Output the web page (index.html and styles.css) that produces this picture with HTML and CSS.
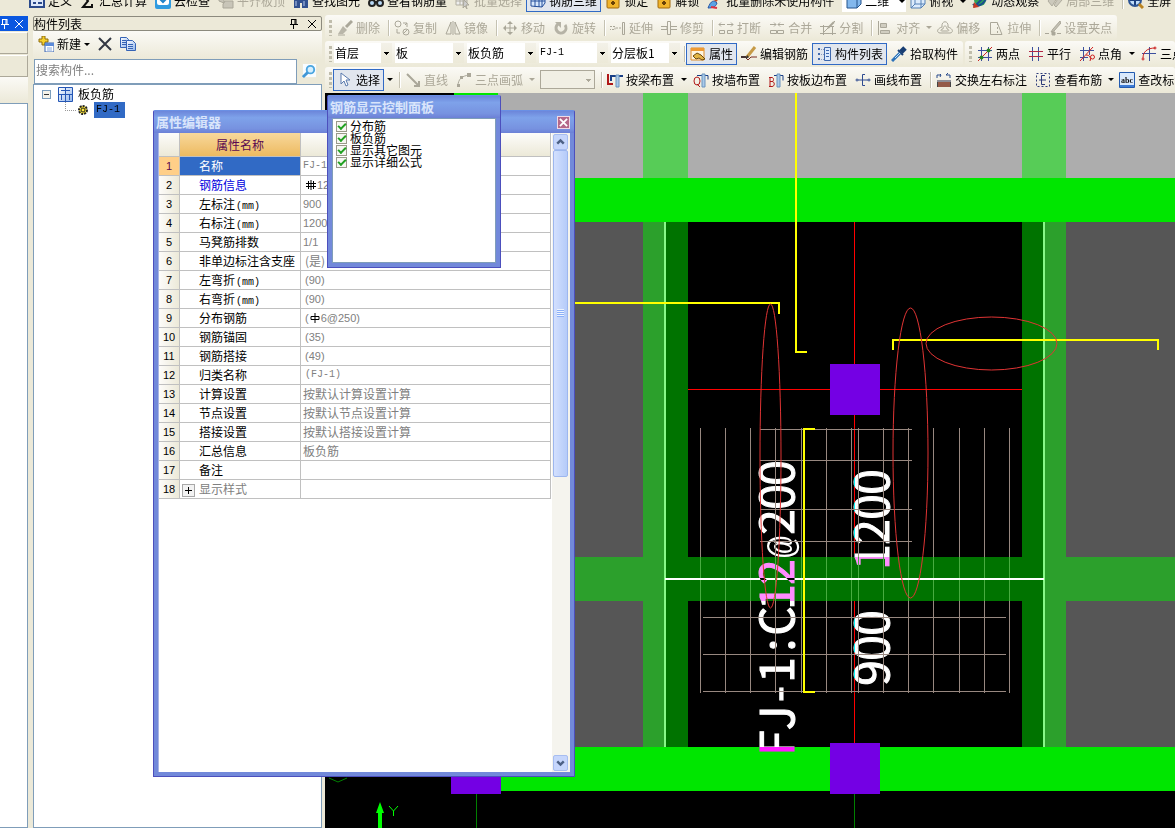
FILE: index.html
```html
<!DOCTYPE html>
<html lang="zh-CN">
<head>
<meta charset="utf-8">
<title>钢筋算量</title>
<link rel="stylesheet" href="styles.css">
</head>
<body>
<svg class="defs" aria-hidden="true">
  <defs>
    <linearGradient id="gb" x1="0" y1="0" x2="1" y2="1"><stop offset="0" stop-color="#fff"/><stop offset="1" stop-color="#8fb4ec"/></linearGradient>
    <symbol id="define" viewBox="0 0 16 16"><path d="M1 1h14v13H1z" fill="#dde8fa" stroke="#2b4a8c" stroke-width="2"/><path d="M4 6h3M4 10h3M9 6h4M9 10h4" stroke="#2b4a8c" stroke-width="2"/></symbol>
    <symbol id="sum" viewBox="0 0 16 16"><path d="M12 5V2H3l5 6-5 6h9v-3" fill="none" stroke="#111" stroke-width="2"/></symbol>
    <symbol id="cloud" viewBox="0 0 16 16"><rect y="0" width="16" height="16" rx="2" fill="#2f9be0"/><rect x="2" y="2" width="12" height="10" rx="2" fill="#fff"/><path d="M5 6l3 3 5-5" fill="none" stroke="#2083c8" stroke-width="2"/></symbol>
    <symbol id="align-top" viewBox="0 0 16 16"><path d="M1 3l5-2v9l-5-2zM7 8h8v7H5v-4z" fill="#c8c5b8" stroke="#aaa799"/><path d="M9 1v6M12 1v6" stroke="#b5b2a5"/></symbol>
    <symbol id="binoc" viewBox="0 0 16 16"><path d="M1 15V7l2-5h3v5h4V2h3l2 5v8H9v-5H7v5z" fill="#31508f"/><path d="M3 8v5M11 8v5M4 3v3M12 3v3" stroke="#b6c9ee" stroke-width="1"/></symbol>
    <symbol id="glasses" viewBox="0 0 16 16"><circle cx="4" cy="10" r="3" fill="#b9d9f6" stroke="#222" stroke-width="2"/><circle cx="12" cy="10" r="3" fill="#b9d9f6" stroke="#222" stroke-width="2"/><path d="M7 9h2" stroke="#222" stroke-width="2"/></symbol>
    <symbol id="batch" viewBox="0 0 16 16"><path d="M1 1h11v11H1zM1 5h11M1 8h11M5 1v11M8 1v11" fill="#eee" stroke="#b2afa2"/><path d="M9 7l5 5-3 0 1 4-2-3-2 2z" fill="#ccc" stroke="#aaa799"/></symbol>
    <symbol id="rebar3d" viewBox="0 0 16 16"><path d="M1 13V4l4-3h10v9l-3 4zM1 8h14M5 1v13M9 1v13M12 4v10" fill="#d6e7fc" stroke="#244f9b"/></symbol>
    <symbol id="lock" viewBox="0 0 16 16"><path d="M4 7V3h7v4" fill="none" stroke="#777" stroke-width="2"/><rect x="2" y="6" width="12" height="9" rx="1" fill="#f1b52c" stroke="#a26b0d"/><path d="M8 8v4M6 10h4" stroke="#694107" stroke-width="2"/></symbol>
    <symbol id="brush" viewBox="0 0 16 16"><path d="M14 1L8 8" stroke="#c14b28" stroke-width="3"/><path d="M1 15c3-8 6-8 9-5-1 4-5 5-9 5z" fill="#5ba3e6" stroke="#2755a4"/><path d="M4 14l6 1" stroke="#d34" stroke-width="2"/></symbol>
    <symbol id="cube" viewBox="0 0 16 16"><path d="M1 4l4-3h10v10l-4 4H1z" fill="#83b8ed" stroke="#24548d"/><path d="M1 4h10v11M11 4l4-3" fill="none" stroke="#24548d"/></symbol>
    <symbol id="cube2" viewBox="0 0 16 16"><path d="M1 4l4-3h10v10l-4 4H1z" fill="#dcebfb" stroke="#5481b6"/><path d="M1 4h10v11M11 4l4-3M5 1v10l-4 4M5 11h10" fill="none" stroke="#5481b6"/></symbol>
    <symbol id="orbit" viewBox="0 0 16 16"><circle cx="8" cy="7" r="6" fill="#31a35a"/><path d="M2 14L14 2M1 11c3 4 10 1 13-5" stroke="#1b4d8f" stroke-width="2" fill="none"/><path d="M1 15l1-6 5 5z" fill="#c73b24"/></symbol>
    <symbol id="part3d" viewBox="0 0 16 16"><path d="M1 8l5-6 4 3-5 8zM7 12l5-8 3 3-6 7z" fill="#ccc9bc" stroke="#b0ad9f"/></symbol>
    <symbol id="full" viewBox="0 0 16 16"><circle cx="7" cy="7" r="6" fill="#bfdcf8" stroke="#2d5595" stroke-width="2"/><path d="M7 2v10M2 7h10" stroke="#1b3f7f" stroke-width="2"/><path d="M11 11l4 4" stroke="#bb8420" stroke-width="3"/></symbol>
    <symbol id="erase" viewBox="0 0 16 16"><path d="M15 1L9 7" stroke="#aaa799" stroke-width="3"/><path d="M6 6l4 4-4 4H1z" fill="#b9b6a9"/><path d="M1 15h7" stroke="#aaa799"/></symbol>
    <symbol id="copy" viewBox="0 0 16 16" fill="none" stroke="#aaa799"><circle cx="4" cy="4" r="3"/><circle cx="12" cy="12" r="3"/><path d="M9 3h4v4M13 3l-2 2M3 9v4h3M9 14l4-4"/></symbol>
    <symbol id="mirror" viewBox="0 0 16 16" fill="none" stroke="#aaa799"><path d="M6 2v12H1zM10 2v12h5zM8 1v14"/></symbol>
    <symbol id="move" viewBox="0 0 16 16"><path d="M8 3v10M3 8h10" stroke="#aaa799"/><path d="M8 1l3 3H5zM8 15l3-3H5zM1 8l3-3v6zM15 8l-3-3v6z" fill="#aaa799"/></symbol>
    <symbol id="rotate" viewBox="0 0 16 16"><path d="M5 4a5 5 0 1 0 7 1" fill="none" stroke="#b6b3a6" stroke-width="3"/><path d="M2 2h6v6z" fill="#b6b3a6"/></symbol>
    <symbol id="extend" viewBox="0 0 16 16" fill="none" stroke="#aaa799"><path d="M0 6.500h5v3H0M6 8h5" stroke-dasharray="2 1"/><path d="M12.500 2.500h2v12h-2z"/></symbol>
    <symbol id="trim" viewBox="0 0 16 16" fill="none" stroke="#aaa799"><path d="M6.500 1.500h3v13h-3zM0 6.500h6v3H0M10 6.500h6M10 9.500h6"/></symbol>
    <symbol id="break" viewBox="0 0 16 16" fill="none" stroke="#aaa799"><path d="M1.500 10.500h5v3h-5zM9.500 10.500h5v3h-5zM7 4.500H1l2-2M1 4.500l2 2M9 4.500h6l-2-2M15 4.500l-2 2"/></symbol>
    <symbol id="merge" viewBox="0 0 16 16" fill="none" stroke="#aaa799"><path d="M1.500 10.500h6v3h-6zM8.500 10.500h6v3h-6zM1 4.500h6l-2-2M7 4.500l-2 2M15 4.500H9l2-2M9 4.500l2 2"/></symbol>
    <symbol id="split" viewBox="0 0 16 16" fill="none" stroke="#aaa799"><path d="M0 6.500h14M0 13.500h16M3.500 5v10M12.500 6v9M15 1L4 12" /><path d="M14 2l-6 6" stroke-width="2"/></symbol>
    <symbol id="align" viewBox="0 0 16 16" fill="none" stroke="#aaa799"><path d="M1.500 1v14M3.500 3.500h6v4h-6zM3.500 10.500h9v3h-9z" fill="#d0cdc0"/></symbol>
    <symbol id="offset" viewBox="0 0 16 16" fill="none" stroke="#aaa799"><path d="M5 7c-1-7 7-7 6 0 6 2 5 6 2 6H3C0 13-1 9 5 7z"/><path d="M6 9c0-4 4-4 4 0 3 1 2 2 0 2H5c-2 0-1-2 1-2z"/></symbol>
    <symbol id="stretch" viewBox="0 0 16 16" fill="none" stroke="#aaa799"><path d="M9 2.500H2.500v12H9M9 2l5 12.500H9"/><path d="M9.500 3v10" stroke-dasharray="2 2"/></symbol>
    <symbol id="grip" viewBox="0 0 16 16"><path d="M15 1l-7 8-2 3 3-1 7-8z" fill="#c3c0b4" stroke="#aaa799"/><path d="M0 13.500h4M12 13.500h4M7 12h3v3H7z" stroke="#aaa799" fill="#aaa799"/></symbol>
    <symbol id="props" viewBox="0 0 16 16"><path d="M1 2h13v12H1z" fill="#fff5df" stroke="#de8d28"/><path d="M1 2h13v3H1z" fill="#ef9b34"/><path d="M3 10l4-3 4 2 4 4-3 1-3-2-3 1z" fill="#e2b544" stroke="#6b4b12"/></symbol>
    <symbol id="editbar" viewBox="0 0 16 16"><path d="M0 11h4l3 3 3-3h6" stroke="#7a2d22" stroke-width="1" fill="none"/><path d="M0 10h6v2H0z" fill="#433"/><path d="M14 1L6 11" stroke="#c69a46" stroke-width="3"/><path d="M6 9l-1 4 3-2z" fill="#333"/></symbol>
    <symbol id="list" viewBox="0 0 16 16"><path d="M8.500 1.500h6v13h-6z" fill="#dceafe" stroke="#3f68ad"/><path d="M10 4.500h3M10 7.500h3M10 10.500h3" stroke="#3f68ad"/><path d="M2 3h2M2 8h2M2 13h2" stroke="#3f68ad" stroke-width="2"/><path d="M5 3.500h3M5 8.500h3M5 13.500h3" stroke="#8a9bbd" stroke-dasharray="1 1"/></symbol>
    <symbol id="picker" viewBox="0 0 16 16"><path d="M14 2l-4 4" stroke="#173d73" stroke-width="5"/><path d="M7 4l5 5" stroke="#173d73" stroke-width="2"/><path d="M9 7l-6 6-2 2" stroke="#2c72b9" stroke-width="3"/><path d="M9 7l-5 5" stroke="#bfe2fa" stroke-width="1"/></symbol>
    <symbol id="twopt" viewBox="0 0 16 16"><path d="M4.500 1v14M11.500 1v14M1 4.500h14M1 11.500h14" stroke="#3c4f9e"/><path d="M1 15L15 1" stroke="#c22"/><circle cx="4.500" cy="11.500" r="2" fill="#27811f"/><circle cx="11.500" cy="4.500" r="2" fill="#27811f"/></symbol>
    <symbol id="parallel" viewBox="0 0 16 16"><path d="M4.500 1v14M10.500 1v14" stroke="#3c4f9e"/><path d="M1 5.500h14M1 10.500h14" stroke="#b22746"/></symbol>
    <symbol id="angle" viewBox="0 0 16 16"><path d="M4.500 1v14M10.500 1v8M1 4.500h14M1 11.500h8" stroke="#3c4f9e"/><path d="M1 15L14 1M11 15a4 4 0 0 0-4-6" stroke="#c22" fill="none"/><circle cx="13.500" cy="11" r="2" fill="none" stroke="#c22"/></symbol>
    <symbol id="arcaxis" viewBox="0 0 16 16"><path d="M8.500 1v14M1 7.500h14" stroke="#3c4f9e"/><path d="M2 12C2 6 6 2 14 2" stroke="#c22" fill="none"/><circle cx="2" cy="13" r="1" fill="none" stroke="#c22"/><circle cx="14" cy="2" r="1" fill="none" stroke="#c22"/></symbol>
    <symbol id="select" viewBox="0 0 16 16"><path d="M4 1v11l3-3 2 5 2-1-2-5h4z" fill="#fff" stroke="#5879ad"/></symbol>
    <symbol id="line" viewBox="0 0 16 16"><path d="M2 2l11 11M14 9v5H9" stroke="#aaa799" stroke-width="2" fill="none"/></symbol>
    <symbol id="arc" viewBox="0 0 16 16"><path d="M2 14C2 7 6 4 13 3" stroke="#aaa799" fill="none"/><path d="M1 12h3v3H1zM4 4h3v3H4zM11 1h4v4h-4z" fill="#aaa799"/></symbol>
    <symbol id="beam" viewBox="0 0 16 16"><path d="M1 2v10h5" stroke="#b01818" stroke-width="2" fill="none"/><path d="M4 9V4h12" stroke="#193f86" stroke-width="2" fill="none"/><path d="M9 3h3v12H9z" fill="#a9cae9" stroke="#6b93bd"/></symbol>
    <symbol id="wall" viewBox="0 0 16 16"><ellipse cx="4" cy="9" rx="3" ry="4" stroke="#b01818" fill="none"/><path d="M4 12l3 3" stroke="#b01818"/><path d="M4 3.500h11v4" stroke="#193f86" fill="none"/><path d="M9 2h3v13H9z" fill="#a9cae9" stroke="#6b93bd"/></symbol>
    <symbol id="edge" viewBox="0 0 16 16"><path d="M1 5.500h3c2 0 2 4 0 4H2h2c3 0 3 5 0 5H1M2 5v9" stroke="#b01818" fill="none"/><path d="M6 3.500h9v5" stroke="#193f86" fill="none"/><path d="M9 2h3v13H9z" fill="#a9cae9" stroke="#6b93bd"/></symbol>
    <symbol id="drawline" viewBox="0 0 16 16" fill="none" stroke="#2e4b90"><path d="M10 2.500H7.500v11H10M3 8h4M8 8h5"/><circle cx="2" cy="8" r="1"/><circle cx="14" cy="8" r="1"/></symbol>
    <symbol id="swap" viewBox="0 0 16 16"><path d="M1 6V3h4l-1-1M4 5l1-2M10 3h4v3M10 3l2-2" stroke="#294b8b" fill="none"/><path d="M1 8h14v7H1z" fill="#444"/><path d="M3 10v5M5 10v5M7 10v5M9 10v5M11 10v5M13 10v5" stroke="#e6704c"/><path d="M1 9h14" stroke="#d8d8e8"/></symbol>
    <symbol id="look" viewBox="0 0 16 16" fill="none" stroke="#2c3b79"><rect x="1.500" y="1.500" width="13" height="13" stroke-dasharray="2 2"/><path d="M10 3.500H6.500v9H10M4 8h7"/></symbol>
    <symbol id="abc" viewBox="0 0 16 16"><path d="M.5.5h15v15H.5z" fill="#d9e9fc" stroke="#235bb0"/><path d="M1 13h14v2H1z" fill="#3d7bd5"/><text x="8" y="11" text-anchor="middle" class="abc-t">abc</text></symbol>
    <symbol id="new" viewBox="0 0 16 16"><path d="M4 0h3v3h3v3H7v3H4V6H1V3h3z" fill="#f6d02c" stroke="#8e6d0d"/><path d="M7 7h9v9H7z" fill="#fff" stroke="#3763b0"/><path d="M7 7h9v3H7z" fill="#5b8ad9"/><path d="M9 12h5M9 14h5" stroke="#86a9de"/></symbol>
    <symbol id="del" viewBox="0 0 16 16"><path d="M2 2l12 12M14 2L2 14" stroke="#333844" stroke-width="2"/></symbol>
    <symbol id="dup" viewBox="0 0 16 16" fill="url(#gb)" stroke="#3563b5"><path d="M.5 1.500h6l2 2v8h-8z"/><path d="M6.500 4.500h6l3 3v7h-9z"/><path d="M8 8.500h5M8 10.500h5M8 12.500h5M2 4.500h4M2 6.500h4M2 8.500h4"/></symbol>
    <symbol id="find" viewBox="0 0 16 16"><path d="M1 0h14v14H1z" fill="#f8fcff"/><circle cx="9" cy="6" r="4" fill="#d5efff" stroke="#4aa5e0" stroke-width="2"/><path d="M6 9l-5 5" stroke="#4197d6" stroke-width="3"/></symbol>
    <symbol id="slab" viewBox="0 0 15 15"><path d="M.5.5h14v14H.5z" fill="url(#gb)" stroke="#2456b5"/><path d="M3 3.500h9M7.500 1v13M1 7.500h13M3.500 8v5M11.500 8v5" stroke="#2456b5" fill="none"/></symbol>
    <symbol id="gear" viewBox="0 0 12 12"><circle cx="6" cy="6" r="4" fill="#ffe838" stroke="#222" stroke-width="2" stroke-dasharray="2 1"/><circle cx="6" cy="6" r="2" fill="none" stroke="#222"/></symbol>
    <symbol id="pin" viewBox="0 0 10 10"><path d="M2.500 0v5M2 .5h5M6 0v5M7 0v5M1 5.500h8M4.500 5v5" stroke="currentColor" fill="none"/></symbol>
    <symbol id="x" viewBox="0 0 10 10"><path d="M1 1l8 8M9 1L1 9" stroke="currentColor" fill="none"/></symbol>
    <symbol id="up" viewBox="0 0 16 16"><path d="M4 10l4-4 4 4" stroke="#4d6185" stroke-width="3" fill="none"/></symbol>
    <symbol id="down" viewBox="0 0 16 16"><path d="M4 6l4 4 4-4" stroke="#4d6185" stroke-width="3" fill="none"/></symbol>
  </defs>
</svg>

<div class="app">
  <div class="top-row">
    <button class="tb"><svg><use href="#define"/></svg>定义</button>
    <button class="tb"><svg><use href="#sum"/></svg>汇总计算</button>
    <button class="tb"><svg><use href="#cloud"/></svg>云检查</button>
    <button class="tb" disabled><svg><use href="#align-top"/></svg>平齐板顶</button>
    <button class="tb"><svg><use href="#binoc"/></svg>查找图元</button>
    <button class="tb"><svg><use href="#glasses"/></svg>查看钢筋量</button>
    <button class="tb" disabled><svg><use href="#batch"/></svg>批量选择</button>
    <button class="tb on"><svg><use href="#rebar3d"/></svg>钢筋三维</button>
    <button class="tb"><svg><use href="#lock"/></svg>锁定</button>
    <button class="tb"><svg><use href="#lock"/></svg>解锁</button>
    <button class="tb"><svg><use href="#brush"/></svg>批量删除未使用构件</button>
    <button class="tb view"><svg><use href="#cube"/></svg>二维<i class="arr"></i></button>
    <button class="tb"><svg><use href="#cube2"/></svg>俯视</button><i class="arr"></i>
    <button class="tb"><svg><use href="#orbit"/></svg>动态观察</button>
    <button class="tb" disabled><svg><use href="#part3d"/></svg>局部三维</button><i class="sep"></i>
    <button class="tb"><svg><use href="#full"/></svg>全屏</button>
  </div>

  <div class="main">
    <aside class="strip">
      <div class="strip-head"><svg><use href="#pin"/></svg><svg><use href="#x"/></svg></div>
      <div class="strip-box"></div><div class="strip-box"></div><div class="strip-bar"></div>
      <div class="strip-body"></div>
    </aside>

    <aside class="panel">
      <div class="panel-head"><span>构件列表</span><svg><use href="#pin"/></svg><svg><use href="#x"/></svg></div>
      <div class="panel-tools">
        <button class="tb"><svg><use href="#new"/></svg>新建<i class="arr"></i></button>
        <button class="tb" aria-label="删除构件"><svg><use href="#del"/></svg></button>
        <button class="tb" aria-label="复制构件"><svg><use href="#dup"/></svg></button>
      </div>
      <div class="search"><input type="text" placeholder="搜索构件..." aria-label="搜索构件"><button aria-label="搜索"><svg><use href="#find"/></svg></button></div>
      <div class="tree">
        <div class="node"><i class="minus"></i><svg><use href="#slab"/></svg><span>板负筋</span></div>
        <div class="node child"><i class="branch"></i><svg><use href="#gear"/></svg><span class="sel">FJ-1</span></div>
      </div>
    </aside>

    <section class="work">
      <div class="bars">
        <div class="bar">
          <i class="grip"></i>
          <button class="tb" disabled><svg><use href="#erase"/></svg>删除</button><i class="sep"></i>
          <button class="tb" disabled><svg><use href="#copy"/></svg>复制</button>
          <button class="tb" disabled><svg><use href="#mirror"/></svg>镜像</button><i class="sep"></i>
          <button class="tb" disabled><svg><use href="#move"/></svg>移动</button>
          <button class="tb" disabled><svg><use href="#rotate"/></svg>旋转</button><i class="sep"></i>
          <button class="tb" disabled><svg><use href="#extend"/></svg>延伸</button>
          <button class="tb" disabled><svg><use href="#trim"/></svg>修剪</button><i class="sep"></i>
          <button class="tb" disabled><svg><use href="#break"/></svg>打断</button>
          <button class="tb" disabled><svg><use href="#merge"/></svg>合并</button>
          <button class="tb" disabled><svg><use href="#split"/></svg>分割</button><i class="sep"></i>
          <button class="tb" disabled><svg><use href="#align"/></svg>对齐</button><i class="arr off"></i>
          <button class="tb" disabled><svg><use href="#offset"/></svg>偏移</button>
          <button class="tb" disabled><svg><use href="#stretch"/></svg>拉伸</button><i class="sep"></i>
          <button class="tb" disabled><svg><use href="#grip"/></svg>设置夹点</button>
        </div>
      </div>
      <div class="bars">
        <div class="bar">
          <i class="grip"></i>
          <select class="combo short" aria-label="楼层"><option>首层</option></select>
          <select class="combo" aria-label="构件类别"><option>板</option></select>
          <select class="combo" aria-label="构件类型"><option>板负筋</option></select>
          <select class="combo latin" aria-label="构件"><option>FJ-1</option></select>
          <select class="combo" aria-label="分层"><option>分层板1</option></select><i class="sep"></i>
          <button class="tb on"><svg><use href="#props"/></svg>属性</button>
          <button class="tb"><svg><use href="#editbar"/></svg>编辑钢筋</button>
          <button class="tb on"><svg><use href="#list"/></svg>构件列表</button>
          <button class="tb"><svg><use href="#picker"/></svg>拾取构件</button>
        </div>
        <div class="bar fill">
          <i class="grip"></i>
          <button class="tb"><svg><use href="#twopt"/></svg>两点</button>
          <button class="tb"><svg><use href="#parallel"/></svg>平行</button>
          <button class="tb"><svg><use href="#angle"/></svg>点角</button><i class="arr"></i>
          <button class="tb"><svg><use href="#arcaxis"/></svg>三点辅轴</button>
        </div>
      </div>
      <div class="bars">
        <div class="bar fill">
          <i class="grip"></i>
          <button class="tb on"><svg><use href="#select"/></svg>选择</button><i class="arr"></i><i class="sep"></i>
          <button class="tb" disabled><svg><use href="#line"/></svg>直线</button>
          <button class="tb" disabled><svg><use href="#arc"/></svg>三点画弧</button><i class="arr off"></i>
          <select class="combo empty" aria-label="画弧方式" disabled><option></option></select><i class="sep"></i>
          <button class="tb"><svg><use href="#beam"/></svg>按梁布置</button><i class="arr"></i>
          <button class="tb"><svg><use href="#wall"/></svg>按墙布置</button>
          <button class="tb"><svg><use href="#edge"/></svg>按板边布置</button>
          <button class="tb"><svg><use href="#drawline"/></svg>画线布置</button><i class="sep"></i>
          <button class="tb"><svg><use href="#swap"/></svg>交换左右标注</button>
          <button class="tb"><svg><use href="#look"/></svg>查看布筋</button><i class="arr off dark"></i>
          <button class="tb"><svg><use href="#abc"/></svg>查改标注</button>
        </div>
      </div>

      <div class="canvas">
        <svg viewBox="325 93 850 735" preserveAspectRatio="xMinYMin slice">
          <rect x="325" y="93" width="850" height="735" fill="#000"/>
          <rect x="498" y="93" width="677" height="85" fill="#adadad"/>
          <rect x="454" y="93" width="44" height="85" fill="#00e600"/>
          <g fill="#57cc57"><rect x="643" y="93" width="45" height="85"/><rect x="1022" y="93" width="44" height="85"/></g>
          <g fill="#565656"><rect x="501" y="222" width="142" height="525"/><rect x="1066" y="222" width="109" height="525"/></g>
          <g fill="#2ca02c"><rect x="643" y="222" width="22" height="525"/><rect x="1044" y="222" width="22" height="525"/><rect x="501" y="557" width="164" height="44"/><rect x="1044" y="557" width="131" height="44"/></g>
          <path d="M854.5 222V557M854.5 601V743M688 389.5H1022" stroke="#f00" fill="none"/>
          <g fill="#007300"><rect x="665" y="222" width="23" height="525"/><rect x="1022" y="222" width="22" height="525"/><rect x="688" y="557" width="334" height="44"/></g>
          <path d="M665 222V747M1044 222V747" stroke="#88f888" stroke-width="2"/>
          <g fill="#00e600"><rect x="501" y="178" width="674" height="44"/><rect x="501" y="747" width="674" height="44"/></g>
          <path d="M665 579H1044" stroke="#fff" stroke-width="2"/>
          <g class="cad">
            <text transform="translate(794 754) rotate(-90)" x="11 36 60 84 109 133 157 182 207 232 257 281">FJ-1:C12<tspan class="at">@</tspan>200</text>
            <text transform="translate(889 754) rotate(-90)" x="197 222 247 272">1200</text>
            <text transform="translate(889 754) rotate(-90)" x="81 106 131">900</text>
          </g>
          <path d="M700.5 428V693M725.5 428V693M750.5 428V693M775.5 428V693M801.5 428V693M826.5 428V693M851.5 428V693M858.5 428V693M883.5 428V693M908.5 428V693M933.5 428V693M959.5 428V693M984.5 428V693M1009.5 428V693M760 429.5H912M760 460.5H912M760 509.5H912M760 541.5H912M703 617.5H1006M703 654.5H1006M703 691.5H1006" stroke="#988880"/>
          <path d="M700.5 557v44M725.5 557v44M750.5 557v44M775.5 557v44M801.5 557v44M826.5 557v44M851.5 557v44M858.5 557v44M883.5 557v44M908.5 557v44M933.5 557v44M959.5 557v44M984.5 557v44M1009.5 557v44" stroke="#48ac40"/>
          <path d="M665 579H760M797 579H1044" stroke="#fff" stroke-width="2"/>
          <path d="M501 303H779V314M796 93V352H807M893 350V340H1158V350M815 429H804V692H815" stroke="#ff0" stroke-width="2" fill="none"/>
          <g fill="none" stroke="#e03434"><ellipse cx="770.5" cy="456" rx="10.5" ry="152"/><ellipse cx="910.5" cy="453" rx="17.5" ry="145"/><ellipse cx="991.5" cy="343.5" rx="65.5" ry="26.5"/></g>
          <g fill="#7400e4"><rect x="830" y="364" width="50" height="51"/><rect x="830" y="743" width="50" height="51"/><rect x="451" y="743" width="50" height="51"/></g>
          <path d="M854.5 794V828M476.5 794V828M329 778l9 4 9-4" stroke="#008000" fill="none"/>
          <path d="M378 828V813h-2l4-11 4 11h-2v15z" fill="#0f0"/>
          <path d="M389 806l4.500 5 4.500-5M393.500 811v5" stroke="#0f0" fill="none"/>
        </svg>
      </div>
    </section>
  </div>

  <section class="win props">
    <header><h2>属性编辑器</h2><button class="close" aria-label="关闭"><svg><use href="#x"/></svg></button></header>
    <div class="win-body">
      <div class="grid">
        <table>
          <thead><tr><th class="no"></th><th class="hot">属性名称</th><th></th></tr></thead>
          <tbody>
            <tr class="cur"><th>1</th><td>名称</td><td class="la">FJ-1</td></tr>
            <tr class="key"><th>2</th><td>钢筋信息</td><td class="in"><svg class="bar-sym" viewBox="0 0 10 10"><path d="M0 3.500h10M0 6.500h10M2.500 1v8M7.500 1v8M5 0v10" stroke="#000" fill="none"/></svg>12</td></tr>
            <tr><th>3</th><td>左标注<span class="mm">(mm)</span></td><td>900</td></tr>
            <tr><th>4</th><td>右标注<span class="mm">(mm)</span></td><td>1200</td></tr>
            <tr><th>5</th><td>马凳筋排数</td><td>1/1</td></tr>
            <tr><th>6</th><td>非单边标注含支座</td><td class="in zh">(是)</td></tr>
            <tr><th>7</th><td>左弯折<span class="mm">(mm)</span></td><td class="in">(90)</td></tr>
            <tr><th>8</th><td>右弯折<span class="mm">(mm)</span></td><td class="in">(90)</td></tr>
            <tr><th>9</th><td>分布钢筋</td><td class="in">(<svg class="bar-sym" viewBox="0 0 10 10"><path d="M1 3.500h8v3H1zM5 0v10" stroke="#000" fill="none"/></svg>6@250)</td></tr>
            <tr><th>10</th><td>钢筋锚固</td><td class="in">(35)</td></tr>
            <tr><th>11</th><td>钢筋搭接</td><td class="in">(49)</td></tr>
            <tr><th>12</th><td>归类名称</td><td class="in la">(FJ-1)</td></tr>
            <tr><th>13</th><td>计算设置</td><td class="zh">按默认计算设置计算</td></tr>
            <tr><th>14</th><td>节点设置</td><td class="zh">按默认节点设置计算</td></tr>
            <tr><th>15</th><td>搭接设置</td><td class="zh">按默认搭接设置计算</td></tr>
            <tr><th>16</th><td>汇总信息</td><td class="zh">板负筋</td></tr>
            <tr><th>17</th><td>备注</td><td></td></tr>
            <tr class="group"><th>18</th><td><button class="plus" aria-label="展开"></button>显示样式</td><td></td></tr>
          </tbody>
        </table>
      </div>
      <div class="scroll">
        <button aria-label="向上"><svg><use href="#up"/></svg></button>
        <div class="track"><div class="thumb"><i></i></div></div>
        <button aria-label="向下"><svg><use href="#down"/></svg></button>
      </div>
    </div>
  </section>

  <section class="win display">
    <header><h2>钢筋显示控制面板</h2></header>
    <div class="win-body checks">
      <label><input type="checkbox" checked>分布筋</label>
      <label><input type="checkbox" checked>板负筋</label>
      <label><input type="checkbox" checked>显示其它图元</label>
      <label><input type="checkbox" checked>显示详细公式</label>
    </div>
  </section>
</div>
</body>
</html>
```
FILE: styles.css
```css
* { box-sizing: border-box; }
body {
  margin: 0;
  font: 12px/16px "Noto Sans CJK SC", sans-serif;
  color: #000;
  background: #ece9d8;
}
button, input, select { font: inherit; color: inherit; margin: 0; padding: 0; border: 0; background: none; }
.defs { position: absolute; width: 0; height: 0; }
.abc-t { font: bold 8px "Liberation Serif", serif; fill: #111; }

.app { position: relative; display: flex; flex-direction: column; height: 100vh; overflow: hidden; }

/* toolbar parts */
.tb {
  display: flex; align-items: center; gap: 3px; flex: none;
  height: 22px; padding: 0 3px; border: 1px solid transparent; white-space: nowrap;
}
.tb svg { width: 16px; height: 16px; flex: none; }
.tb:disabled { color: #aca899; }
.tb.on { border-color: #316ac5; background: #e1e6ee; }
.arr { flex: none; width: 11px; height: 3px; display: flex; justify-content: center; }
.arr::after { content: ""; border: 3px solid transparent; border-top-color: #000; border-bottom: 0; }
.arr.off { width: 9px; }
.arr.off::after { border-top-color: #aca899; }
.arr.dark::after { border-top-color: #000; }
.sep { flex: none; width: 6px; height: 16px; border-right: 1px solid #fff; background: linear-gradient(#c5c2b2, #c5c2b2) 4px 0 / 1px 100% no-repeat; }
.grip { flex: none; width: 3px; height: 16px; margin: 0 1px 0 4px; background: repeating-linear-gradient(#c0bdac 0 3px, transparent 3px 5px); }

.top-row { display: flex; align-items: center; flex: none; height: 22px; margin-top: -10px; padding-left: 25px; overflow: hidden; }
.top-row .view { margin-left: 4px; width: 64px; background: #fff; }
.top-row .view .arr { margin-left: 4px; }

.main { display: flex; flex: 1; min-height: 0; padding-top: 3px; }

/* cut-off dock on the left */
.strip { display: flex; flex-direction: column; flex: none; width: 28px; margin: 1px 5px 0 0; }
.strip-head { display: flex; align-items: center; justify-content: space-between; height: 15px; padding: 0 4px 0 0; background: #0a57e0; color: #fff; }
.strip-head svg { width: 10px; height: 10px; }
.strip-box { height: 22px; margin-top: 1px; border: 1px solid #aca899; border-left: 0; border-top-color: #fff; }
.strip-bar { height: 26px; background: linear-gradient(#fbfaf6, #ece9d8); }
.strip-body { flex: 1; background: #fff; border: 1px solid #7f9db9; border-left: 0; }

/* component list */
.panel { display: flex; flex-direction: column; flex: none; width: 289px; margin: 1px 3px 0 0; }
.panel-head { display: flex; align-items: center; gap: 8px; height: 15px; padding-right: 4px; border: 1px solid #8c8a7e; border-radius: 2px; line-height: 13px; }
.panel-head span { flex: 1; }
.panel-head svg { width: 10px; height: 10px; }
.panel-tools { display: flex; align-items: center; height: 28px; padding: 0 0 2px 1px; background: linear-gradient(#fbfaf6, #ece9d8); }
.panel-tools .arr { width: 6px; }
.panel-tools .tb { padding: 0 2px 0 3px; }
.search { display: flex; height: 25px; padding-left: 1px; }
.search input { flex: 1; min-width: 0; padding: 0 1px 4px; border: 1px solid #7f9db9; background: #fff; }
.search input::placeholder { color: #808080; opacity: 1; }
.search button { width: 25px; display: grid; place-items: center; }
.search svg { width: 15px; height: 15px; }
.tree { flex: 1; border: 1px solid #7f9db9; background: #fff; padding-top: 1px; }
.node { display: flex; align-items: center; height: 16px; padding-left: 8px; }
.node svg { width: 15px; height: 15px; margin: 0 5px 0 7px; }
.minus { width: 9px; height: 9px; border: 1px solid #7b9ebd; background: linear-gradient(#333, #333) center / 5px 1px no-repeat, #f5f3ea; }
.child { padding-left: 31px; }
.child svg { width: 12px; height: 12px; margin: 0 5px 0 1px; }
.branch { width: 11px; height: 9px; margin-bottom: 8px; border: 1px dotted #999; border-width: 0 0 1px 1px; }
.sel { height: 16px; width: 31px; padding-left: 2px; background: #316ac5; color: #000; font: 10px/16px "Liberation Mono", monospace; }

/* work area */
.work { display: flex; flex-direction: column; flex: 1; min-width: 0; }
.bars { display: flex; flex: none; height: 26px; gap: 2px; }
.bar { display: flex; align-items: center; flex: none; height: 25px; padding-right: 1px; border-radius: 3px; background: linear-gradient(#fbfaf6, #ece9d8); }
.bar.fill { flex: 1; min-width: 0; overflow: hidden; }
.combo {
  appearance: none; flex: none; width: 69px; height: 20px; margin: 0 0 2px 3px; padding-left: 1px; border-radius: 0;
  background: linear-gradient(#000, #000) right 3px top 9px / 5px 1px no-repeat,
    linear-gradient(#000, #000) right 4px top 10px / 3px 1px no-repeat,
    linear-gradient(#000, #000) right 5px top 11px / 1px 1px no-repeat,
    linear-gradient(#f3f1e8, #ece9d8) right / 11px 100% no-repeat, #fff;
}
.combo.short { width: 58px; margin-left: 1px; }
.combo.latin { font: 10px/16px "Liberation Mono", monospace; }
.combo.empty { width: 55px; height: 19px; margin: 0 2px 0 4px; border: 1px solid #aca899; opacity: 1;
  background: linear-gradient(#aca899, #aca899) right 3px top 8px / 5px 1px no-repeat,
    linear-gradient(#aca899, #aca899) right 4px top 9px / 3px 1px no-repeat,
    linear-gradient(#aca899, #aca899) right 5px top 10px / 1px 1px no-repeat, #f1efe4; }
.canvas { flex: 1; min-height: 0; background: #000; overflow: hidden; }
.canvas svg { display: block; width: 100%; height: 100%; }
.cad text { font: 46px "Noto Sans CJK SC", sans-serif; fill: #fff; stroke: #fff; stroke-width: 1px; text-anchor: middle; mix-blend-mode: difference; }
.cad .at { font: 36px "Liberation Mono", monospace; stroke: none; }

/* floating windows */
.win { position: absolute; display: flex; flex-direction: column; padding: 0 4px 4px; border: 1px solid #4c4fbd; border-top-color: #6a8fe4; border-radius: 2px 2px 0 0; background: #7289da; }
.win header { display: flex; align-items: center; justify-content: space-between; flex: none; height: 22px; margin: 0 -4px; padding: 0 4px 0 2px; background: linear-gradient(#6c86da, #7ea2ea 30%, #7792e0 80%, #6c80d6); }
.win h2 { margin: 0; font-size: 13px; line-height: 20px; color: #d9e5fb; white-space: nowrap; }
.win-body { flex: 1; min-height: 0; background: #fff; }
.props { left: 153px; top: 110px; width: 422px; height: 667px; }
.props .win-body { display: flex; border-left: 1px solid #a9b4e4; }
.close { width: 13px; height: 13px; display: grid; place-items: center; border: 1px solid #f0d9e6; background: #b5688a; color: #fff; }
.close svg { width: 9px; height: 9px; stroke-width: 2px; }
.grid { flex: 1; min-width: 0; }
table { width: 100%; border-collapse: separate; border-spacing: 0; table-layout: fixed; }
th, td { height: 19px; padding: 0; line-height: 16px; border: solid #c0c0c0; border-width: 0 1px 1px 0; font-weight: normal; text-align: left; white-space: nowrap; overflow: hidden; }
thead th { height: 24px; background: linear-gradient(#fdfcfa, #ece9d8); }
thead .no { width: 21px; }
thead .hot { width: 121px; text-align: center; color: #5a0850; background: linear-gradient(#f8d89c, #edba60); }
tbody th { text-align: center; font: 11px/16px "Liberation Sans", sans-serif; background: linear-gradient(90deg, #fdfcfa, #ece9d8); }
td:nth-child(2) { padding-left: 19px; }
td:nth-child(3) { padding-left: 2px; color: #808080; font-family: "Liberation Sans", sans-serif; font-size: 11px; }
td.in:nth-child(3) { padding-left: 4px; }
td.zh:nth-child(3) { font-family: "Noto Sans CJK SC", sans-serif; font-size: 12px; }
td.la:nth-child(3) { font: 10px/16px "Liberation Mono", monospace; }
.mm { font: 10px/10px "Liberation Mono", monospace; margin-left: 1px; }
.cur th { background: #ffcf88; color: #5a0850; }
.cur td:nth-child(2) { background: #316ac5; color: #fff; }
.key td:nth-child(2) { color: #0000e0; }
.group td:nth-child(2) { color: #808080; padding-left: 2px; }
.bar-sym { width: 10px; height: 10px; margin: 0 1px; vertical-align: -1px; }
.plus { width: 13px; height: 13px; margin-right: 4px; vertical-align: -2px; border: 1px solid #a8a8a8;
  background: linear-gradient(#000, #000) center / 7px 1px no-repeat, linear-gradient(#000, #000) center / 1px 7px no-repeat, #f2f2f2; }
.scroll { display: flex; flex-direction: column; flex: none; width: 19px; padding: 1px 2px 1px 1px; background: #f5f4ee; border-left: 1px solid #fff; }
.scroll button { width: 15px; height: 16px; border: 1px solid #a7bdf0; border-radius: 2px; background: #c6d6fc; }
.scroll svg { display: block; width: 13px; height: 14px; }
.track { flex: 1; min-height: 0; }
.thumb { display: grid; place-items: center; width: 15px; height: 54%; border: 1px solid #9db6ee; border-radius: 2px; background: linear-gradient(90deg, #d3e0fe, #b5cbf9); }
.thumb i { width: 7px; height: 8px; background: repeating-linear-gradient(#eef4fe 0 1px, #8cb0f8 1px 2px); }
.display { left: 327px; top: 95px; width: 174px; height: 173px; }
.checks { border: 1px solid #7f9db9; outline: 1px solid #fff; outline-offset: -2px; padding: 1px 3px; }
.checks label { display: flex; align-items: center; gap: 3px; height: 12px; line-height: 12px; white-space: nowrap; }
.checks input { appearance: none; width: 11px; height: 11px; border: 1px solid #9a9a8a; background: #f6f6f2; display: grid; place-items: center; }
.checks input:checked::after { content: ""; width: 6px; height: 3px; margin-bottom: 2px; border: solid #21a121; border-width: 0 0 2px 2px; transform: rotate(-45deg); }
```
